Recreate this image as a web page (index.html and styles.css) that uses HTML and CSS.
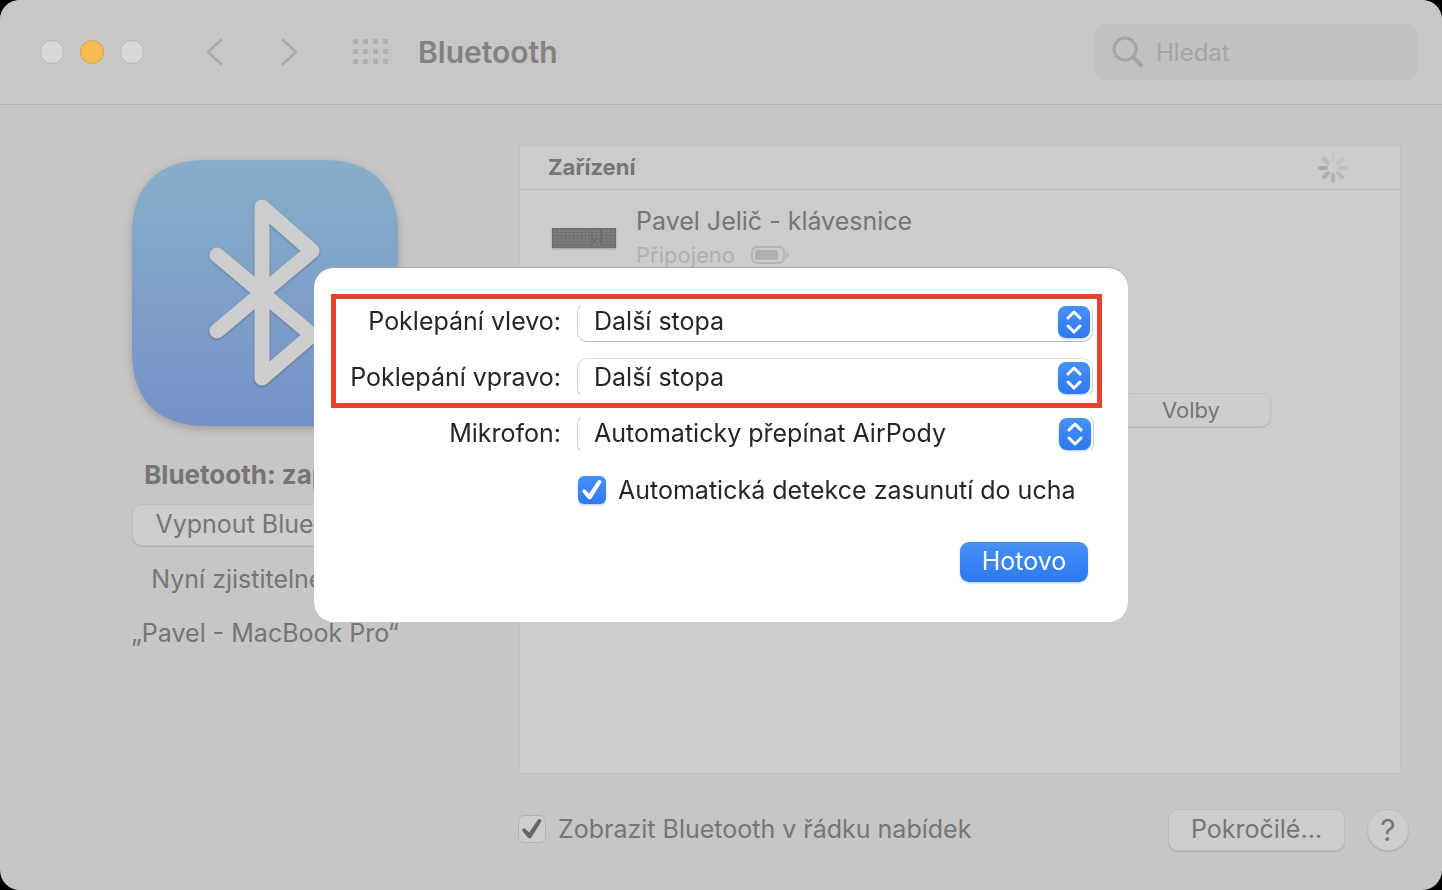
FILE: index.html
```
<!DOCTYPE html>
<html lang="cs">
<head>
    <meta charset="UTF-8">
    <meta name="viewport" content="width=device-width, initial-scale=1">
    <title>Bluetooth</title>
    <link rel="stylesheet" href="styles.css">
</head>
<body>

<div class="window">
    <header class="toolbar">
        <div class="lights">
            <button type="button" class="light" aria-label="Zavřít"></button>
            <button type="button" class="light light-yellow" aria-label="Minimalizovat"></button>
            <button type="button" class="light" aria-label="Zvětšit"></button>
        </div>
        <nav class="nav">
            <button type="button" class="icon-btn" aria-label="Zpět">
                <svg width="20" height="30" viewBox="0 0 20 30"><path d="M17 3 4 15 17 27"/></svg>
            </button>
            <button type="button" class="icon-btn" aria-label="Vpřed">
                <svg width="20" height="30" viewBox="0 0 20 30"><path d="M5 3 18 15 5 27"/></svg>
            </button>
        </nav>
        <button type="button" class="icon-btn" aria-label="Zobrazit vše">
            <svg class="grid-icon" width="36" height="26" viewBox="0 0 36 26">
                <rect x="1" y="0" width="5" height="5" rx="1"/><rect x="11" y="0" width="5" height="5" rx="1"/><rect x="21" y="0" width="5" height="5" rx="1"/><rect x="31" y="0" width="5" height="5" rx="1"/>
                <rect x="1" y="10" width="5" height="5" rx="1"/><rect x="11" y="10" width="5" height="5" rx="1"/><rect x="21" y="10" width="5" height="5" rx="1"/><rect x="31" y="10" width="5" height="5" rx="1"/>
                <rect x="1" y="20" width="5" height="5" rx="1"/><rect x="11" y="20" width="5" height="5" rx="1"/><rect x="21" y="20" width="5" height="5" rx="1"/><rect x="31" y="20" width="5" height="5" rx="1"/>
            </svg>
        </button>
        <h1 class="title">Bluetooth</h1>
        <label class="search">
            <svg width="32" height="32" viewBox="0 0 32 32"><circle cx="13" cy="13" r="11"/><path class="handle" d="M22 22 29 29"/></svg>
            <input type="search" placeholder="Hledat" aria-label="Hledat">
        </label>
    </header>

    <main class="content">
        <aside class="status">
            <svg class="bt-logo" width="266" height="266" viewBox="0 0 266 266">
                <defs>
                    <linearGradient id="bt-fill" x1="0" y1="0" x2="0" y2="1">
                        <stop offset="0" stop-color="#87afc9"/>
                        <stop offset="1" stop-color="#7691c8"/>
                    </linearGradient>
                </defs>
                <path fill="url(#bt-fill)" d="M74 0H192C240 0 266 26 266 74V192C266 240 240 266 192 266H74C26 266 0 240 0 192V74C0 26 26 0 74 0Z"/>
                <path class="rune" d="M85 95 180 175 130 218V47L180 91 85 171"/>
            </svg>
            <h2 class="state">Bluetooth: zapnuto</h2>
            <button type="button" class="btn">Vypnout Bluetooth</button>
            <p class="visible-as">Nyní zjistitelné jako</p>
            <p class="name">„Pavel - MacBook Pro“</p>
        </aside>

        <section class="devices">
            <div class="devices-head">
                <h3>Zařízení</h3>
                <svg width="32" height="32" viewBox="-16 -16 32 32">
                    <path stroke="#c6c6c6" d="M0-7V-13"/>
                    <path stroke="#c2c2c2" d="M5-5 9-9"/>
                    <path stroke="#bdbdbd" d="M7 0H13"/>
                    <path stroke="#bababa" d="M5 5 9 9"/>
                    <path stroke="#b4b4b4" d="M0 7V13"/>
                    <path stroke="#afafaf" d="M-5 5-9 9"/>
                    <path stroke="#ababab" d="M-7 0H-13"/>
                    <path stroke="#bababa" d="M-5-5-9-9"/>
                </svg>
            </div>
            <ul class="device-list">
                <li class="device">
                    <svg class="keyboard" width="64" height="22" viewBox="0 0 64 22">
                        <rect x="0" y="1" width="64" height="20" fill="#707070"/>
                        <g stroke="#808080" stroke-width="2" stroke-dasharray="3 1">
                            <path d="M2 4H39M2 7H39M2 10H39M2 13H39M2 16H39"/>
                            <path d="M41 4H49M41 7H49M41 10H49M51 4H62M51 7H62M51 10H62M51 13H62M51 16H62"/>
                            <path d="M44 14H47M41 17H49"/>
                        </g>
                        <path stroke="#808080" d="M2 19H62"/>
                    </svg>
                    <div class="device-text">
                        <div class="device-name">Pavel Jelič - klávesnice</div>
                        <div class="device-state">Připojeno
                            <svg width="38" height="18" viewBox="0 0 38 18">
                                <rect x="1" y="1" width="32" height="16" rx="5" fill="none" stroke="#b4b4b4" stroke-width="2"/>
                                <rect x="4" y="4" width="23" height="10" rx="2" fill="#b0b0b0"/>
                                <path fill="#b4b4b4" d="M35 6Q38 7 38 9T35 12Z"/>
                            </svg>
                        </div>
                    </div>
                </li>
                <li class="device device-selected">
                    <button type="button" class="btn btn-small">Volby</button>
                </li>
            </ul>
        </section>
    </main>

    <footer class="footer">
        <label class="check">
            <input type="checkbox" checked>
            <span>Zobrazit Bluetooth v řádku nabídek</span>
        </label>
        <button type="button" class="btn">Pokročilé…</button>
        <button type="button" class="btn btn-help" aria-label="Nápověda">?</button>
    </footer>
</div>

<div class="overlay">
    <form class="sheet" role="dialog" aria-label="Nastavení AirPodů">
        <div class="marked">
            <div class="row">
                <label for="tap-left">Poklepání vlevo:</label>
                <div class="popup popup-low">
                    <select id="tap-left"><option>Další stopa</option></select>
                    <svg width="32" height="32" viewBox="0 0 32 32"><path d="M10 12 16 6 22 12M10 20 16 26 22 20"/></svg>
                </div>
            </div>
            <div class="row">
                <label for="tap-right">Poklepání vpravo:</label>
                <div class="popup popup-high">
                    <select id="tap-right"><option>Další stopa</option></select>
                    <svg width="32" height="32" viewBox="0 0 32 32"><path d="M10 12 16 6 22 12M10 20 16 26 22 20"/></svg>
                </div>
            </div>
        </div>
        <div class="row row-mic">
            <label for="mic">Mikrofon:</label>
            <div class="popup">
                <select id="mic"><option>Automaticky přepínat AirPody</option></select>
                <svg width="32" height="32" viewBox="0 0 32 32"><path d="M10 12 16 6 22 12M10 20 16 26 22 20"/></svg>
            </div>
        </div>
        <label class="check check-blue">
            <input type="checkbox" checked>
            <span>Automatická detekce zasunutí do ucha</span>
        </label>
        <button type="button" class="done">Hotovo</button>
    </form>
</div>

</body>
</html>
```
FILE: styles.css
```
* {
    box-sizing: border-box;
}
body {
    margin: 0;
    background: #000;
    color: #757575;
    font-family: Inter, "Liberation Sans", sans-serif;
    font-size: 25px;
    line-height: 32px;
}
h1, h2, h3, p, ul {
    margin: 0;
    padding: 0;
}
button, input, select {
    font: inherit;
    color: inherit;
}
.window {
    display: flex;
    flex-direction: column;
    min-height: 100vh;
    background: #c7c5c6;
    border-radius: 20px;
    overflow: hidden;
}

/* toolbar */
.toolbar {
    display: flex;
    align-items: center;
    height: 105px;
    padding: 0 24px 0 40px;
    background: #c8c6c7;
    border-bottom: 1px solid #b5b3b4;
}
.lights {
    display: flex;
    gap: 16px;
}
.light {
    width: 24px;
    height: 24px;
    padding: 0;
    border: 1px solid #b9b8b7;
    border-radius: 50%;
    background: #d8d7d6;
}
.light-yellow {
    border-color: #dca146;
    background: #f5bd4f;
}
.nav {
    display: flex;
    gap: 54px;
    margin: 0 54px 0 60px;
}
.icon-btn {
    display: flex;
    padding: 0;
    border: 0;
    background: none;
}
.icon-btn svg {
    fill: none;
    stroke: #adabac;
    stroke-width: 3;
    stroke-linecap: round;
    stroke-linejoin: round;
}
.icon-btn .grid-icon {
    fill: #b0aeaf;
    stroke: none;
}
.title {
    margin-left: 30px;
    font-size: 30px;
    font-weight: 600;
    color: #828282;
}
.search {
    display: flex;
    align-items: center;
    gap: 12px;
    width: 324px;
    height: 56px;
    margin-left: auto;
    padding: 0 18px;
    border-radius: 12px;
    background: #c1c1c1;
}
.search svg {
    flex: none;
    fill: none;
    stroke: #a4a4a4;
    stroke-width: 3;
}
.search .handle {
    stroke-width: 4;
    stroke-linecap: round;
}
.search input {
    width: 100%;
    min-width: 0;
    padding: 2px 0 0;
    border: 0;
    outline: 0;
    background: none;
    font-size: 24px;
}
.search input::placeholder {
    color: #a5a5a5;
}

/* left column and device table */
.content {
    display: grid;
    grid-template-columns: 270px 1fr;
    gap: 119px;
    flex: 1;
    padding: 40px 41px 0 130px;
}
.status {
    display: flex;
    flex-direction: column;
    align-items: center;
    padding-top: 15px;
    white-space: nowrap;
}
.bt-logo {
    margin-bottom: 33px;
    filter: drop-shadow(0 3px 4px rgba(0, 0, 0, .2));
}
.rune {
    fill: none;
    stroke: #cdcdcd;
    stroke-width: 15;
    stroke-linecap: round;
    stroke-linejoin: round;
    filter: drop-shadow(0 1px 1px rgba(0, 0, 0, .25));
}
.state {
    margin-bottom: 13px;
    font-size: 26px;
    font-weight: 700;
}
.visible-as {
    margin: 17px 0 22px;
}
.btn {
    height: 42px;
    padding: 0 22px 2px;
    border: 1px solid #bebcbd;
    border-radius: 10px;
    background: #cdcdcd;
    box-shadow: 0 1px 1px #aeacad;
    line-height: 32px;
}
.btn-small {
    width: 160px;
    height: 34px;
    margin-left: auto;
    padding: 0;
    border-color: #c1c1c1;
    box-shadow: 0 1px 1px #b4b4b4;
    font-size: 22px;
}
.btn-help {
    width: 42px;
    padding: 0;
    border-radius: 50%;
    font-size: 30px;
}
.devices {
    border: 1px solid #c2c1c1;
    background: #ccc;
}
.devices-head {
    display: flex;
    align-items: center;
    justify-content: space-between;
    height: 44px;
    padding: 0 51px 0 28px;
    border-bottom: 1px solid #bababa;
}
.devices-head h3 {
    padding-bottom: 2px;
    font-size: 22px;
    font-weight: 700;
}
.devices-head svg {
    stroke-width: 4;
    stroke-linecap: round;
}
.device-list {
    padding: 5px 0;
    list-style: none;
}
.device {
    display: flex;
    align-items: center;
    gap: 20px;
    height: 86px;
    padding: 0 129px 0 32px;
}
.keyboard {
    filter: drop-shadow(0 1px 1px #a0a0a0);
}
/* room for the row behind the sheet */
.device-selected {
    margin-top: 86px;
}
.device-state {
    display: flex;
    align-items: center;
    gap: 16px;
    margin-top: 2px;
    font-size: 22px;
    color: #b0b0b0;
}

/* bottom bar */
.footer {
    display: flex;
    align-items: center;
    gap: 22px;
    padding: 35px 33px 39px 518px;
}
.check {
    display: flex;
    align-items: center;
    gap: 12px;
    margin-right: auto;
    padding-bottom: 2px;
}
.check input {
    display: grid;
    place-items: center;
    width: 28px;
    height: 28px;
    margin: 0;
    border: 1px solid #b4b3b3;
    border-radius: 6px;
    background: #cdcdcd;
    appearance: none;
}
.check input:checked::before {
    content: "";
    width: 20px;
    height: 20px;
    background: #666;
    clip-path: polygon(0 58%, 5% 48%, 15% 48%, 36% 68%, 80% 2%, 92% 0, 98% 10%, 46% 94%, 38% 98%, 30% 94%);
}

/* settings sheet */
.overlay {
    position: fixed;
    inset: 0;
    display: flex;
    align-items: center;
    justify-content: center;
}
.sheet {
    display: flex;
    flex-direction: column;
    width: 814px;
    max-width: 100%;
    padding: 26px 26px 40px 17px;
    border-radius: 20px;
    background: #fff;
    box-shadow: 0 -1px 1px #a9a9a9;
    color: #262626;
}
.marked {
    display: grid;
    gap: 16px;
    padding: 3px 4px 5px;
    border: 5px solid #e6432d;
}
.row {
    display: grid;
    grid-template-columns: 221px 1fr;
    align-items: center;
    gap: 16px;
}
.row label {
    padding-bottom: 2px;
    text-align: right;
    white-space: nowrap;
}
.row-mic {
    margin: 6px 8px 0 9px;
}
.popup {
    position: relative;
    height: 40px;
    border: 1px solid transparent;
    border-left-color: #d0d0d0;
    border-right-color: #d0d0d0;
    border-radius: 10px;
}
.popup-low {
    border-bottom-color: #b9b9b9;
}
.popup-high {
    border-top-color: #dedede;
}
.popup select {
    display: block;
    width: 100%;
    height: 38px;
    padding: 0 48px 2px 16px;
    border: 0;
    background: none;
    appearance: none;
}
.popup svg {
    position: absolute;
    top: 3px;
    right: 2px;
    border-radius: 8px;
    background: linear-gradient(#4591f7, #2f78f0);
    box-shadow: 0 1px 2px #a9cdfb;
    fill: none;
    stroke: #fff;
    stroke-width: 3;
    stroke-linecap: round;
    stroke-linejoin: round;
    pointer-events: none;
}
.check-blue {
    margin: 20px 0 0 247px;
    padding: 0;
    white-space: nowrap;
}
.check-blue input {
    border: 0;
    background: linear-gradient(#4591f7, #2f78f0);
    box-shadow: 0 1px 2px #a9cdfb;
}
.check-blue input:checked::before {
    background: #fff;
}
.done {
    width: 128px;
    height: 40px;
    margin: 36px 14px 0 auto;
    padding: 0 0 2px;
    border: 0;
    border-radius: 9px;
    background: linear-gradient(#4591f7, #2f78f0);
    box-shadow: 0 1px 2px #a9cdfb;
    color: #fff;
    line-height: 32px;
}
```
